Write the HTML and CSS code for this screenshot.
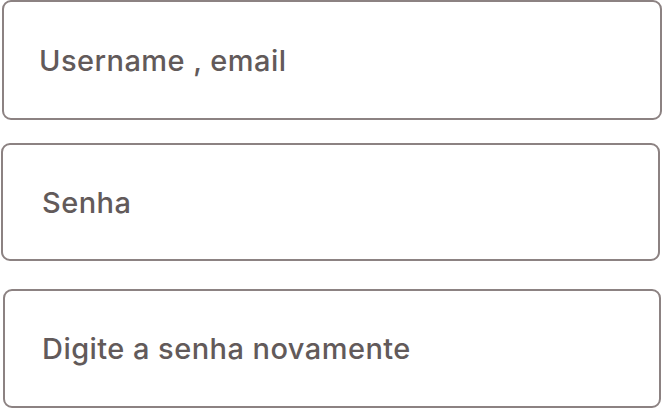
FILE: index.html
```html
<!DOCTYPE html>
<html lang="pt">
<head>
<meta charset="utf-8">
<link rel="stylesheet" href="styles.css">
</head>
<body>
<form class="form">
  <label class="field field-user"><input class="input" type="text" placeholder="Username , email"></label>
  <label class="field field-pass"><input class="input" type="password" placeholder="Senha"></label>
  <label class="field field-repeat"><input class="input" type="password" placeholder="Digite a senha novamente"></label>
</form>
</body>
</html>
```
FILE: styles.css
```css
html, body {
  margin: 0;
  padding: 0;
  background: #ffffff;
}
.form {
  display: flex;
  flex-direction: column;
  width: 662px;
}
.field {
  display: flex;
  box-sizing: border-box;
  border: 2px solid #8c8282;
  border-radius: 9px;
  background: #fff;
}
.field-user {
  margin-left: 2px;
  width: 660px;
  height: 120px;
}
.field-pass {
  margin-top: 23px;
  margin-left: 1px;
  width: 659px;
  height: 118px;
}
.field-repeat {
  margin-top: 28px;
  margin-left: 3px;
  width: 658px;
  height: 119px;
}
.input {
  flex: 1;
  border: 0;
  outline: none;
  background: transparent;
  padding: 0 0 0 35px;
  font-family: "Inter", "Open Sans", sans-serif;
  font-weight: 500;
  font-size: 29px;
  letter-spacing: 0.45px;
  color: #625a5a;
}
.field-pass .input {
  padding-left: 39px;
}
.field-repeat .input {
  padding-left: 37px;
}
.input::placeholder {
  color: #625a5a;
  opacity: 1;
}
```
